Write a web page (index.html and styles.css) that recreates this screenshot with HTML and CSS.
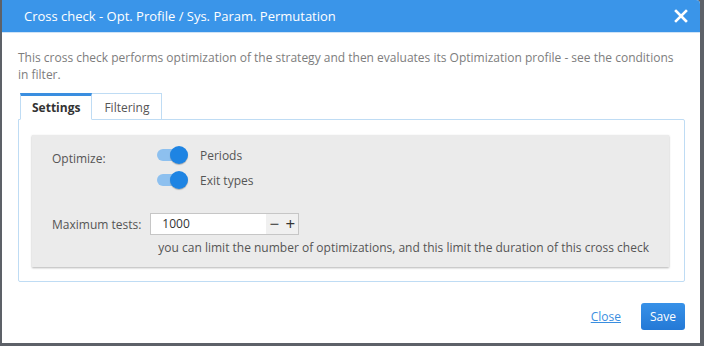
FILE: index.html
```html
<!DOCTYPE html>
<html lang="en">
<head>
    <meta charset="UTF-8">
    <title>Cross check</title>
    <link rel="stylesheet" href="styles.css">
</head>
<body>

<div class="modal">
    <div class="modal-header">
        <span class="modal-title">Cross check - Opt. Profile / Sys. Param. Permutation</span>
        <span class="modal-close">
            <svg width="14" height="14" viewBox="0 0 14 14"><path d="M2 2 L12 12 M12 2 L2 12" stroke="#fff" stroke-width="2.6" stroke-linecap="square"/></svg>
        </span>
    </div>

    <div class="modal-body">
        <p class="intro">This cross check performs optimization of the strategy and then evaluates its Optimization profile - see the conditions in filter.</p>

        <div class="tabs">
            <div class="tab active">Settings</div>
            <div class="tab">Filtering</div>
        </div>

        <div class="tab-pane">
            <div class="panel">
                <div class="row">
                    <div class="label">Optimize:</div>
                    <div class="switches">
                        <div class="switch-line"><span class="switch"><span class="knob"></span></span>Periods</div>
                        <div class="switch-line"><span class="switch"><span class="knob"></span></span>Exit types</div>
                    </div>
                </div>
                <div class="row tests-row">
                    <div class="label tests-label">Maximum tests:</div>
                    <div>
                        <div class="spinner">
                            <span class="spin-value">1000</span>
                            <span class="spin-btn">&minus;</span>
                            <span class="spin-btn">+</span>
                        </div>
                        <div class="hint">you can limit the number of optimizations, and this limit the duration of this cross check</div>
                    </div>
                </div>
            </div>
        </div>
    </div>

    <div class="modal-footer">
        <a href="#" class="close-link">Close</a>
        <button class="save-btn">Save</button>
    </div>
</div>

</body>
</html>
```

FILE: styles.css
```css
/* page */
body {
    margin: 0;
    background-color: #5d6168;
    font-family: "Open Sans", "Liberation Sans", sans-serif;
    font-size: 12px;
    height: 346px;
    overflow: hidden;
}

/* dialog */
.modal {
    margin-left: 2px;
    width: 698px;
    height: 343px;
    background-color: #fff;
    border-top-right-radius: 4px;
    display: flex;
    flex-direction: column;
}

.modal-header {
    height: 32px;
    background-color: #3a95e9;
    border-top-right-radius: 4px;
    display: flex;
    align-items: center;
    justify-content: space-between;
    padding: 0 12px 0 22px;
    border-bottom: 1px solid #cfe3f6;
}

.modal-title {
    color: #fff;
    font-size: 13px;
}

.modal-close {
    display: flex;
}

.modal-body {
    padding: 16px 15px 0 16px;
    flex: 1;
}

.intro {
    margin: 0;
    color: #7d7d7d;
    line-height: 17px;
}

/* tabs */
.tabs {
    display: flex;
    margin-top: 10px;
    margin-left: 2px;
}

.tab {
    padding: 5px 11px 2px 12px;
    color: #555;
    border: 1px solid #bfdcf4;
    border-bottom: none;
    border-left: none;
    height: 18px;
    line-height: 18px;
}

.tab.active {
    font-weight: bold;
    color: #333;
    border-top: 3px solid #3a8ee0;
    border-left: 1px solid #bfdcf4;
    padding: 3px 11px 2px 11px;
    border-bottom: 1px solid #fff;
    margin-bottom: -1px;
}

.tab-pane {
    border: 1px solid #bfdcf4;
    border-radius: 0 2px 2px 2px;
    padding: 15px 15px 14px 13px;
    height: 132px;
}

.panel {
    background-color: #ebebeb;
    box-shadow: 0 1px 2px rgba(0, 0, 0, 0.3);
    padding: 10px 20px 0 20px;
    height: 122px;
    color: #555;
}

.row {
    display: flex;
}

.label {
    width: 105px;
    padding-top: 5px;
    white-space: nowrap;
}

.switches {
    display: flex;
    flex-direction: column;
    gap: 5px;
}

.switch-line {
    display: flex;
    align-items: center;
    height: 20px;
}

.switch {
    position: relative;
    width: 27px;
    height: 12px;
    border-radius: 6px;
    background-color: #8dc0ef;
    margin-right: 16px;
}

.knob {
    position: absolute;
    right: -4px;
    top: -3px;
    width: 18px;
    height: 18px;
    border-radius: 50%;
    background-color: #1e84e3;
    box-shadow: 0 1px 1px rgba(0, 0, 0, 0.25);
}

.tests-row {
    margin-top: 23px;
}

.tests-label {
    width: 99px;
    padding-top: 3px;
}

.spinner {
    display: flex;
    width: 147px;
    height: 20px;
    border: 1px solid #c6c6c6;
    background-color: #fff;
}

.spin-value {
    flex: 1;
    padding-left: 11px;
    line-height: 20px;
    color: #333;
}

.spin-btn {
    width: 16px;
    background-color: #f0f0f0;
    text-align: center;
    font-size: 17px;
    line-height: 19px;
    color: #333;
}

.hint {
    margin: 4px 0 0 8px;
    line-height: 18px;
    white-space: nowrap;
}

/* footer */
.modal-footer {
    display: flex;
    justify-content: flex-end;
    align-items: center;
    padding: 0 15px 13px 0;
    gap: 20px;
}

.close-link {
    color: #3a8ee0;
    text-decoration: underline;
    font-size: 12px;
}

.save-btn {
    background: linear-gradient(#3791e8, #2479d6);
    color: #fff;
    border: none;
    border-radius: 3px;
    font-family: inherit;
    font-size: 12px;
    width: 44px;
    height: 27px;
}
```
